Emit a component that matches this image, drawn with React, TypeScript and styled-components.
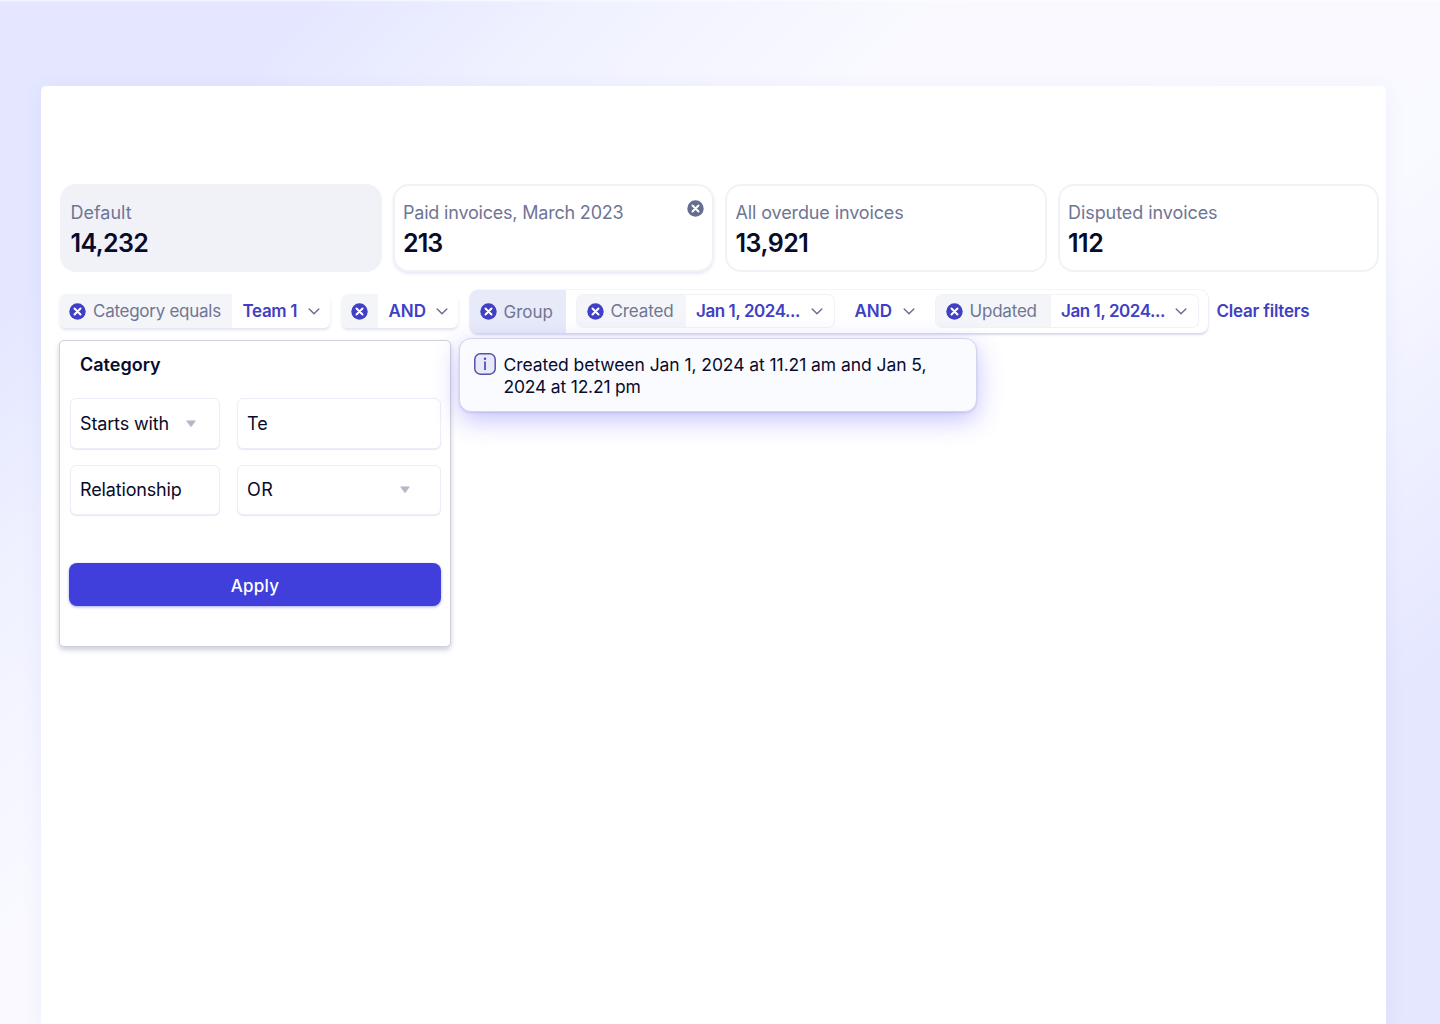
import React from "react";
import styled, { createGlobalStyle, css } from "styled-components";

const color = {
  ink: "#090b2b",
  muted: "#6f7594",
  primary: "#413fc4",
  button: "#403fdb",
  line: "#f1f2f8",
};

const Global = createGlobalStyle`
  * { box-sizing: border-box; }
  body { margin: 0; font-family: Inter, "Liberation Sans", sans-serif; color: ${color.ink}; }
  button { font-family: inherit; border: 0; padding: 0; margin: 0; background: none; }
  svg { display: block; flex: none; }
`;

const Page = styled.div`
  height: 1024px;
  overflow: hidden;
  padding: 86px 54px 0 41px;
  background: linear-gradient(135deg, #e4e7ff 13%, #eff1ff 23%, #f9f9ff 38%, #f9faff 64%, #f0f1ff 74%, #e5e7ff 85%);
  box-shadow: inset 0 1.5px 0 rgba(255, 255, 255, 0.5);
`;

const Panel = styled.main`
  height: 938px;
  padding: 98px 7px 0 19px;
  background: #fff;
  border-radius: 5px 5px 0 0;
  box-shadow: 0 4px 22px rgba(90, 92, 230, 0.07);
`;

const Text = styled.span<{ $track?: number }>`
  letter-spacing: ${(p) => p.$track ?? 0}px;
  white-space: nowrap;
`;

const Cards = styled.section`
  display: grid;
  grid-template-columns: repeat(4, 1fr);
  gap: 11px;
`;

const Card = styled.article<{ $active?: boolean; $raised?: boolean }>`
  display: flex;
  justify-content: space-between;
  height: 88px;
  padding: 14px 8px 0 8.5px;
  border: 2.5px solid ${color.line};
  border-radius: 16px;
  background: ${(p) => (p.$active ? color.line : "#fff")};
  ${(p) => p.$raised && css`box-shadow: 0 2px 3px rgba(80, 84, 170, 0.13);`}
`;

const CardBody = styled.div`
  display: flex;
  flex-direction: column;
`;

const CardLabel = styled(Text)`
  font-size: 18px;
  line-height: 26px;
  color: ${color.muted};
`;

const CardValue = styled(Text)`
  font-size: 25px;
  line-height: 34px;
  font-weight: 600;
`;

const CardClose = styled.button`
  align-self: flex-start;
  margin-top: -0.5px;
`;

const Filters = styled.section`
  display: flex;
  align-items: center;
  height: 44px;
  margin-top: 17px;
`;

const Chip = styled.div<{ $width: number; $flat?: boolean }>`
  display: flex;
  flex: none;
  width: ${(p) => p.$width}px;
  height: 34px;
  overflow: hidden;
  border-radius: 6px;
  background: #fff;
  box-shadow: ${(p) =>
    p.$flat ? `0 0 0 1px ${color.line}` : "0 2px 3px rgba(80, 84, 170, 0.17)"};
  ${(p) => p.$flat && css`height: 32px;`}
`;

const ChipLabel = styled.div<{ $width: number; $inset?: number }>`
  display: flex;
  align-items: center;
  gap: 7px;
  width: ${(p) => p.$width}px;
  padding-left: ${(p) => p.$inset ?? 10}px;
  font-size: 17px;
  color: ${color.muted};
  background: #f4f5f9;
`;

const ChipValue = styled.button`
  display: flex;
  flex: 1;
  align-items: center;
  justify-content: space-between;
  padding: 0 10.5px 0 10.5px;
  font-size: 17px;
  font-weight: 600;
  color: ${color.primary};
`;

const Group = styled.div`
  display: flex;
  flex: none;
  align-items: center;
  width: 738px;
  height: 43px;
  margin-left: 11.5px;
  padding-right: 10px;
  overflow: hidden;
  border-radius: 8px;
  background: #fff;
  box-shadow: 0 0 0 1px rgba(220, 223, 245, 0.35), 0 2px 2px rgba(80, 84, 170, 0.22);
`;

const GroupLabel = styled(ChipLabel)`
  height: 44px;
  margin-right: 11px;
  padding-top: 1px;
  background: #e7eaf9;
`;

const Operator = styled.button`
  display: flex;
  flex: 1;
  align-items: center;
  justify-content: space-between;
  height: 34px;
  padding: 0 21px;
  font-size: 17px;
  font-weight: 600;
  color: ${color.primary};
`;

const Gap = styled.i`
  flex: none;
  width: 12px;
`;

const ClearButton = styled.button`
  margin-left: 9px;
  font-size: 17px;
  font-weight: 600;
  color: ${color.primary};
`;

const Popovers = styled.div`
  position: relative;
  margin-top: 7px;
`;

const Editor = styled.form`
  width: 392px;
  height: 307px;
  margin-left: -1px;
  padding: 10px 9px 0;
  border: 1px solid #cfd1df;
  border-radius: 5px;
  background: #fff;
  box-shadow: 0 3px 5px rgba(60, 66, 120, 0.25);
`;

const EditorTitle = styled.h2`
  margin: 0 0 20px 11px;
  font-size: 18px;
  line-height: 27px;
  font-weight: 600;
`;

const Fields = styled.div`
  display: grid;
  grid-template-columns: 150px 204px;
  justify-content: space-between;
  row-gap: 16px;
  padding: 0 0 0 1px;
`;

const Field = styled.div<{ $arrowInset?: number }>`
  display: flex;
  align-items: center;
  justify-content: space-between;
  height: 50.5px;
  padding: 0 ${(p) => p.$arrowInset ?? 10}px 0 9px;
  border: 1px solid #eceef7;
  border-radius: 6px;
  font-size: 18px;
  background: #fff;
  box-shadow: 0 1px 1px #e6e9f4;
`;

const Apply = styled.button`
  width: 372px;
  height: 42.5px;
  margin-top: 48px;
  padding-top: 3px;
  border-radius: 8px;
  font-size: 17px;
  font-weight: 500;
  color: #fff;
  background: ${color.button};
  box-shadow: 0 1px 3px rgba(64, 63, 219, 0.45);
`;

const Tooltip = styled.aside`
  position: absolute;
  top: -2px;
  left: 398.5px;
  display: flex;
  gap: 8px;
  width: 518px;
  height: 73.5px;
  padding: 14px;
  border: 1px solid #d3d4ef;
  border-radius: 12px;
  background: #fafbfe;
  box-shadow: 0 8px 26px rgba(77, 72, 245, 0.33), 0 1px 2px rgba(77, 72, 200, 0.18);
`;

const TooltipText = styled.p`
  display: flex;
  flex-direction: column;
  margin: 0;
  padding-top: 1px;
  font-size: 17.5px;
  line-height: 22px;
`;

const CloseIcon = ({ fill = color.primary }: { fill?: string }) => (
  <svg width="17" height="17" viewBox="0 0 17 17">
    <circle cx="8.5" cy="8.5" r="8.2" fill={fill} />
    <path d="M5.5 5.5l6 6M11.5 5.5l-6 6" stroke="#fff" strokeWidth="2" strokeLinecap="round" />
  </svg>
);

const Chevron = () => (
  <svg width="12" height="8" viewBox="0 0 12 8" fill="none">
    <path d="M1.2 2l4.8 4.8L10.8 2" stroke="#6c7192" strokeWidth="1.5" strokeLinecap="round" strokeLinejoin="round" />
  </svg>
);

const Arrow = () => (
  <svg width="10" height="7" viewBox="0 0 10 7">
    <path d="M.6.8h8.8L5.5 6.3q-.5.6-1 0z" fill="#b5b7c6" stroke="#b5b7c6" strokeWidth=".6" strokeLinejoin="round" />
  </svg>
);

const InfoIcon = () => (
  <svg width="22" height="22" viewBox="0 0 22 22" fill="none">
    <rect x=".8" y=".8" width="20.4" height="20.4" rx="5.5" fill="#e8eafa" stroke="#5450ad" strokeWidth="1.5" />
    <path d="M11 8.6V17" stroke="#4b47bd" strokeWidth="1.7" />
    <circle cx="11" cy="5.8" r="1.2" fill="#4b47bd" />
  </svg>
);

const cards = [
  { label: "Default", track: 0, value: "14,232", valueTrack: -0.6, active: true },
  { label: "Paid invoices, March 2023", track: -0.2, value: "213", valueTrack: -0.9, raised: true },
  { label: "All overdue invoices", track: -0.12, value: "13,921", valueTrack: -0.5 },
  { label: "Disputed invoices", track: -0.07, value: "112", valueTrack: -0.5 },
];

export default function App() {
  return (
    <Page>
      <Global />
      <Panel>
        <Cards>
          {cards.map((c) => (
            <Card key={c.label} $active={c.active} $raised={c.raised}>
              <CardBody>
                <CardLabel $track={c.track}>{c.label}</CardLabel>
                <CardValue $track={c.valueTrack}>{c.value}</CardValue>
              </CardBody>
              {c.raised && (
                <CardClose aria-label="Remove">
                  <CloseIcon fill="#666d91" />
                </CardClose>
              )}
            </Card>
          ))}
        </Cards>

        <Filters>
          <Chip $width={270}>
            <ChipLabel $width={172} $inset={9}>
              <CloseIcon />
              <Text $track={-0.27}>Category equals</Text>
            </ChipLabel>
            <ChipValue>
              <Text $track={-0.35}>Team 1</Text>
              <Chevron />
            </ChipValue>
          </Chip>
          <Gap />
          <Chip $width={116}>
            <ChipLabel $width={36} $inset={9}>
              <CloseIcon />
            </ChipLabel>
            <ChipValue>
              <Text>AND</Text>
              <Chevron />
            </ChipValue>
          </Chip>
          <Group>
            <GroupLabel $width={96}>
              <CloseIcon />
              <Text>Group</Text>
            </GroupLabel>
            <Chip $width={257} $flat>
              <ChipLabel $width={109}>
                <CloseIcon />
                <Text $track={-0.1}>Created</Text>
              </ChipLabel>
              <ChipValue>
                <Text $track={-0.42}>Jan 1, 2024...</Text>
                <Chevron />
              </ChipValue>
            </Chip>
            <Operator>
              <Text>AND</Text>
              <Chevron />
            </Operator>
            <Chip $width={262} $flat>
              <ChipLabel $width={115}>
                <CloseIcon />
                <Text $track={-0.2}>Updated</Text>
              </ChipLabel>
              <ChipValue>
                <Text $track={-0.42}>Jan 1, 2024...</Text>
                <Chevron />
              </ChipValue>
            </Chip>
          </Group>
          <ClearButton>
            <Text $track={-0.22}>Clear filters</Text>
          </ClearButton>
        </Filters>

        <Popovers>
          <Editor onSubmit={(e) => e.preventDefault()}>
            <EditorTitle>Category</EditorTitle>
            <Fields>
              <Field $arrowInset={23}>
                <Text $track={-0.15}>Starts with</Text>
                <Arrow />
              </Field>
              <Field>
                <Text>Te</Text>
              </Field>
              <Field>
                <Text $track={-0.15}>Relationship</Text>
              </Field>
              <Field $arrowInset={30}>
                <Text $track={0.5}>OR</Text>
                <Arrow />
              </Field>
            </Fields>
            <Apply type="submit">
              <Text $track={0.3}>Apply</Text>
            </Apply>
          </Editor>
          <Tooltip>
            <InfoIcon />
            <TooltipText>
              <Text $track={-0.07}>Created between Jan 1, 2024 at 11.21 am and Jan 5,</Text>
              <Text $track={-0.2}>2024 at 12.21 pm</Text>
            </TooltipText>
          </Tooltip>
        </Popovers>
      </Panel>
    </Page>
  );
}
